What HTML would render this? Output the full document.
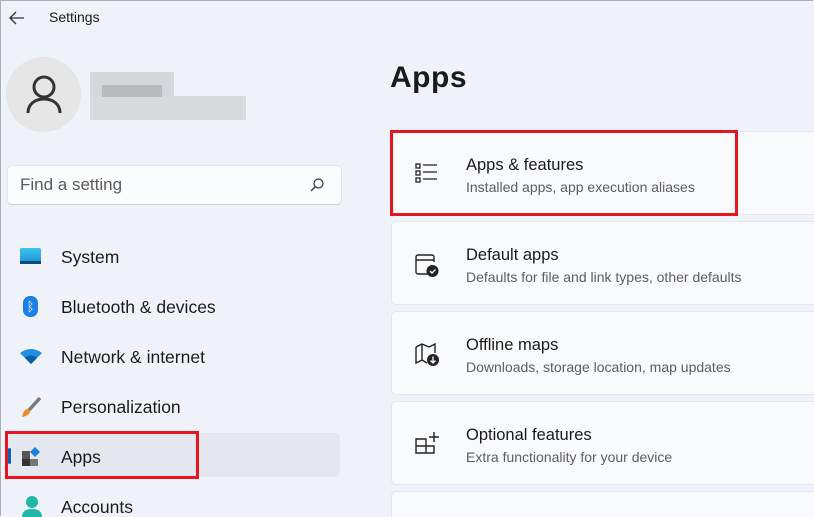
<!DOCTYPE html><html style="width:814px;height:517px;overflow:hidden"><head><style>
body{margin:0;width:814px;height:517px;overflow:hidden;background:#eff3f9;font-family:"Liberation Sans",sans-serif;position:relative;color:#1a1a1a}
.a{position:absolute}
.win{position:absolute;left:0;top:0;width:812px;height:515px;border:1px solid #a9b0ad;border-right:none;border-bottom:none}
.nav{position:absolute;left:61px;font-size:17.5px;color:#1b1b1b}
.card{position:absolute;left:391px;width:440px;height:82px;background:#f9fafc;border:1px solid #e3e6ea;border-radius:5px}
.t{position:absolute;left:74px;top:24px;font-size:16.5px;color:#1b1b1b}
.s{position:absolute;left:74px;top:47px;font-size:14px;color:#5d5d5d}
.ic{position:absolute;left:22px;top:30px}
</style></head><body>
<div class="win"></div>
<svg class="a" style="left:8px;top:10px" width="18" height="16"><path d="M16 8H2M8 2L2 8l6 6" stroke="#333" stroke-width="1.3" fill="none"/></svg>
<div class="a" style="left:49px;top:9px;font-size:14px">Settings</div>
<div class="a" style="left:6px;top:57px;width:75px;height:75px;border-radius:50%;background:#e6e6e6"></div>
<svg class="a" style="left:25px;top:73px" width="38" height="42"><circle cx="19" cy="14" r="10" stroke="#333" stroke-width="3" fill="none"/><path d="M3 40c0-9 7-14 16-14s16 5 16 14" stroke="#333" stroke-width="3" fill="none"/></svg>
<div class="a" style="left:90px;top:72px;width:84px;height:24px;background:#d4d6d9"></div>
<div class="a" style="left:90px;top:96px;width:156px;height:24px;background:#d8dadd"></div>
<div class="a" style="left:102px;top:85px;width:60px;height:12px;background:#b8babd"></div>
<div class="a" style="left:7px;top:165px;width:333px;height:38px;background:#fbfcfd;border:1px solid #e0e3e7;border-bottom-color:#c9ccd0;border-radius:5px"></div>
<div class="a" style="left:20px;top:175px;font-size:17px;color:#5b5b5b">Find a setting</div>
<svg class="a" style="left:309px;top:177px" width="16" height="16"><circle cx="9.5" cy="6.5" r="4.5" stroke="#333" stroke-width="1.2" fill="none"/><path d="M6.5 9.5L2 14" stroke="#333" stroke-width="1.3"/></svg>
<div class="a" style="left:20px;top:248px;width:21px;height:16px;background:linear-gradient(#3cc3ee,#1a8fd2);border-radius:2px"></div>
<div class="a" style="left:20px;top:261px;width:21px;height:3px;background:#0c4a78"></div>
<div class="nav" style="top:247px">System</div>
<div class="a" style="left:23px;top:296px;width:15px;height:21px;border-radius:7px;background:#1a7fe6;color:#fff;font-size:13px;text-align:center;line-height:21px">ᛒ</div>
<div class="nav" style="top:297px">Bluetooth &amp; devices</div>
<svg class="a" style="left:20px;top:348px" width="22" height="16"><path d="M0 5Q11-3 22 5L11 16Z" fill="#1f8fe0"/><path d="M5 10Q11 5 17 10L11 16Z" fill="#0b5ca8"/></svg>
<div class="nav" style="top:347px">Network &amp; internet</div>
<svg class="a" style="left:20px;top:396px" width="22" height="22"><path d="M20 2L9 14" stroke="#7a7a7a" stroke-width="3.5"/><path d="M8 13c-4 0-5 4-6 8 4-1 8-2 8-6z" fill="#f08a24"/></svg>
<div class="nav" style="top:397px">Personalization</div>
<div class="a" style="left:8px;top:433px;width:332px;height:44px;background:#e4e8ee;border-radius:5px"></div>
<div class="a" style="left:8px;top:448px;width:3px;height:16px;background:#0067c0;border-radius:2px"></div>
<svg class="a" style="left:22px;top:447px" width="20" height="20"><rect x="0" y="4" width="8" height="8" fill="#555"/><rect x="0" y="12" width="8" height="7" fill="#333"/><rect x="8" y="12" width="8" height="7" fill="#777"/><path d="M13 0l5 5-5 5-5-5z" fill="#1a7fe0"/></svg>
<div class="nav" style="top:447px">Apps</div>
<div class="a" style="left:5px;top:431px;width:188px;height:42px;border:3px solid #e8141f"></div>
<svg class="a" style="left:21px;top:496px" width="22" height="21"><circle cx="11" cy="6" r="6" fill="#1fb8a8"/><path d="M1 21c0-6 4-8 10-8s10 2 10 8z" fill="#1fb8a8"/></svg>
<div class="nav" style="top:497px">Accounts</div>
<div class="a" style="left:390px;top:61px;font-size:30px;font-weight:bold;color:#1b1b1b;letter-spacing:0.5px">Apps</div>
<div class="card" style="top:131px"><svg class="ic" width="24" height="24" style="top:29px"><g stroke="#222" stroke-width="1.3" fill="none"><rect x="2" y="3" width="4" height="4"/><rect x="2" y="10" width="4" height="4"/><rect x="2" y="17" width="4" height="4"/><path d="M9 4h14M9 11h14M9 18h14"/></g></svg><div class="t">Apps &amp; features</div><div class="s">Installed apps, app execution aliases</div></div>
<div class="card" style="top:221px"><svg class="ic" width="26" height="26" style="top:30px"><path d="M15 22H4a2 2 0 0 1-2-2V5a2 2 0 0 1 2-2h14a2 2 0 0 1 2 2v5M2 8h18" stroke="#222" stroke-width="1.4" fill="none"/><circle cx="18.5" cy="19" r="6" fill="#222"/><path d="M16 19l2 2 3.5-3.5" stroke="#fff" stroke-width="1.4" fill="none"/></svg><div class="t">Default apps</div><div class="s">Defaults for file and link types, other defaults</div></div>
<div class="card" style="top:311px"><svg class="ic" width="26" height="26" style="top:30px"><path d="M2 5l6-3 7 3 6-3v9M13 21l-5-3-6 3V5M8 2v16" stroke="#222" stroke-width="1.4" fill="none"/><circle cx="19" cy="18" r="6" fill="#222"/><path d="M19 14.5v6M16.5 18.5l2.5 2.5 2.5-2.5" stroke="#fff" stroke-width="1.3" fill="none"/></svg><div class="t">Offline maps</div><div class="s">Downloads, storage location, map updates</div></div>
<div class="card" style="top:401px"><svg class="ic" width="26" height="26" style="top:30px"><path d="M2 7h10v14H2zM2 14h18v7h-8M12 7v14M20 0v10M15 5h10" stroke="#222" stroke-width="1.4" fill="none"/></svg><div class="t">Optional features</div><div class="s">Extra functionality for your device</div></div>
<div class="card" style="top:491px;height:30px"></div>
<div class="a" style="left:390px;top:130px;width:342px;height:80px;border:3px solid #e8141f"></div>
</body></html>
